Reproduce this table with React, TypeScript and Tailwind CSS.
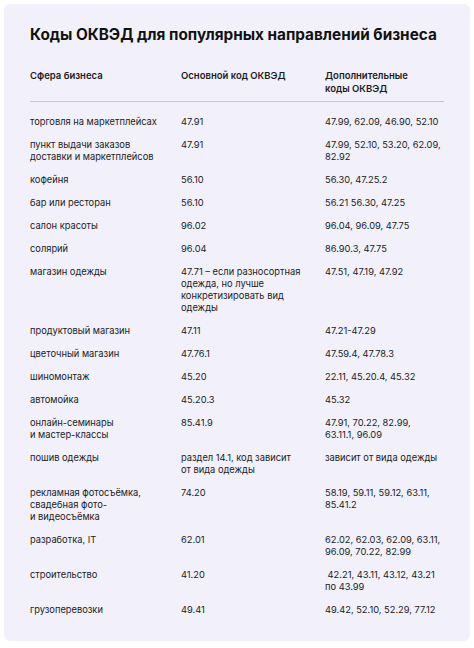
const ROWS: [string, string, string][] = [
  ["торговля на маркетплейсах", "47.91", "47.99, 62.09, 46.90, 52.10"],
  ["пункт выдачи заказов\nдоставки и маркетплейсов", "47.91", "47.99, 52.10, 53.20, 62.09,\n82.92"],
  ["кофейня", "56.10", "56.30, 47.25.2"],
  ["бар или ресторан", "56.10", "56.21 56.30, 47.25"],
  ["салон красоты", "96.02", "96.04, 96.09, 47.75"],
  ["солярий", "96.04", "86.90.3, 47.75"],
  ["магазин одежды", "47.71 – если разносортная\nодежда, но лучше\nконкретизировать вид\nодежды", "47.51, 47.19, 47.92"],
  ["продуктовый магазин", "47.11", "47.21-47.29"],
  ["цветочный магазин", "47.76.1", "47.59.4, 47.78.3"],
  ["шиномонтаж", "45.20", "22.11, 45.20.4, 45.32"],
  ["автомойка", "45.20.3", "45.32"],
  ["онлайн-семинары\nи мастер-классы", "85.41.9", "47.91, 70.22, 82.99,\n63.11.1, 96.09"],
  ["пошив одежды", "раздел 14.1, код зависит\nот вида одежды", "зависит от вида одежды"],
  ["рекламная фотосъёмка,\nсвадебная фото-\nи видеосъёмка", "74.20", "58.19, 59.11, 59.12, 63.11,\n85.41.2"],
  ["разработка, IT", "62.01", "62.02, 62.03, 62.09, 63.11,\n96.09, 70.22, 82.99"],
  ["строительство", "41.20", " 42.21, 43.11, 43.12, 43.21\nпо 43.99"],
  ["грузоперевозки", "49.41", "49.42, 52.10, 52.29, 77.12"],
];

export default function App() {
  return (
    <div className="w-[474px] h-[648px] bg-white p-[4px] pb-[7px] font-['Inter',sans-serif] text-[#1b1b1f]">
      <div className="h-full rounded-[6px] bg-[#f2f1fb] px-[26px] pt-[20px]">
        <h1 className="whitespace-nowrap text-[15.3px] font-bold leading-[22px] text-[#111]">
          Коды ОКВЭД для популярных направлений бизнеса
        </h1>

        {/* header */}
        <div className="mt-[23px] grid grid-cols-[151px_144px_1fr] border-b border-[#c9c8d6] pb-[6px] text-[9.5px] font-semibold leading-[13px]">
          <div>Сфера бизнеса</div>
          <div>Основной код ОКВЭД</div>
          <div>
            Дополнительные
            <br />
            коды ОКВЭД
          </div>
        </div>

        {/* rows */}
        <div className="mt-[14px] grid grid-cols-[151px_144px_1fr] gap-y-[11px] text-[9.3px] leading-[12px]">
          {ROWS.map((r, i) => (
            <div key={i} className="contents">
              {r.map((c, j) => (
                <div key={j} className="whitespace-pre">
                  {c}
                </div>
              ))}
            </div>
          ))}
        </div>
      </div>
    </div>
  );
}
